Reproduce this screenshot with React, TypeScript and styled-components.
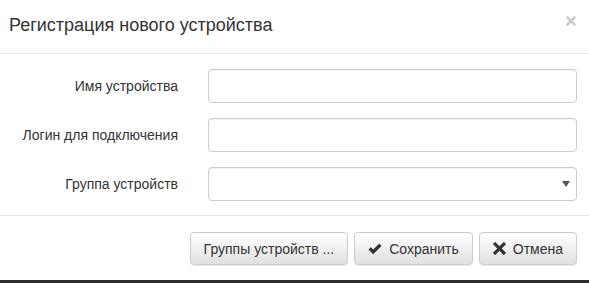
import React from "react";
import styled, { createGlobalStyle } from "styled-components";

const Global = createGlobalStyle`
  html, body { margin: 0; padding: 0; background: #fff; }
  body { font-family: "Liberation Sans", Arial, sans-serif; color: #333; }
  * { box-sizing: border-box; }
`;

const Modal = styled.div`
  width: 589px;
  height: 283px;
  background: #fff;
  display: flex;
  flex-direction: column;
`;

const Header = styled.div`
  height: 54px;
  border-bottom: 1px solid #e5e5e5;
  display: flex;
  align-items: flex-start;
  justify-content: space-between;
  padding: 13px 13px 0 9px;
`;

const Title = styled.h4`
  margin: 0;
  font-size: 18px;
  line-height: 24px;
  font-weight: normal;
  color: #333;
`;

const Close = styled.button`
  border: 0;
  background: none;
  padding: 0;
  margin-top: 3px;
  color: #c8c8c8;
  display: flex;
  cursor: pointer;
`;

const Body = styled.div`
  padding: 15px 12px 14px 0;
  display: flex;
  flex-direction: column;
  gap: 15px;
  border-bottom: 1px solid #e5e5e5;
`;

const Row = styled.div`
  display: flex;
  align-items: center;
  gap: 30px;
`;

const Label = styled.label`
  width: 178px;
  text-align: right;
  font-size: 14px;
  color: #333;
`;

const Input = styled.div`
  flex: 1;
  height: 34px;
  border: 1px solid #ccc;
  border-radius: 4px;
  background: #fff;
  box-shadow: inset 0 1px 1px rgba(0, 0, 0, 0.05);
  display: flex;
  align-items: center;
  justify-content: flex-end;
  padding-right: 6px;
`;

const Footer = styled.div`
  flex: 1;
  display: flex;
  justify-content: flex-end;
  align-items: flex-start;
  gap: 6px;
  padding: 16px 12px 0 0;
`;

const Button = styled.button`
  height: 33px;
  padding: 0 13px;
  font-family: "Liberation Sans", Arial, sans-serif;
  font-size: 14px;
  color: #333;
  border: 1px solid #ccc;
  border-radius: 4px;
  background: linear-gradient(to bottom, #fff 0%, #e0e0e0 100%);
  box-shadow: inset 0 1px 0 rgba(255, 255, 255, 0.15), 0 1px 1px rgba(0, 0, 0, 0.075);
  display: flex;
  align-items: center;
  gap: 7px;
  cursor: pointer;
`;

const Bottom = styled.div`
  height: 3px;
  background: #2d2d2d;
`;

const Caret = () => (
  <svg width="8" height="6" viewBox="0 0 8 6">
    <path d="M0 0 H8 L4 6 Z" fill="#555" />
  </svg>
);

const CheckIcon = () => (
  <svg width="14" height="12" viewBox="0 0 14 12">
    <path d="M0.5 6.5 L2.8 4.2 L5.2 6.6 L11.2 0.6 L13.5 2.9 L5.2 11.2 Z" fill="#333" />
  </svg>
);

const XIcon = ({ size = 12, color = "#333" }: { size?: number; color?: string }) => (
  <svg width={size} height={size} viewBox="0 0 12 12">
    <path d="M2 2 L10 10 M10 2 L2 10" stroke={color} strokeWidth="3" strokeLinecap="square" />
  </svg>
);

export default function App() {
  return (
    <>
      <Global />
      <Modal>
        <Header>
          <Title>Регистрация нового устройства</Title>
          <Close aria-label="close">
            <XIcon size={10} color="#c8c8c8" />
          </Close>
        </Header>
        <Body>
          <Row>
            <Label>Имя устройства</Label>
            <Input />
          </Row>
          <Row>
            <Label>Логин для подключения</Label>
            <Input />
          </Row>
          <Row>
            <Label>Группа устройств</Label>
            <Input>
              <Caret />
            </Input>
          </Row>
        </Body>
        <Footer>
          <Button>Группы устройств ...</Button>
          <Button>
            <CheckIcon />
            Сохранить
          </Button>
          <Button>
            <XIcon size={13} />
            Отмена
          </Button>
        </Footer>
        <Bottom />
      </Modal>
    </>
  );
}
